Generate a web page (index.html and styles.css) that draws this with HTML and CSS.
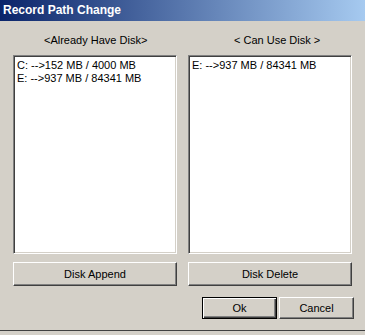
FILE: index.html
```html
<!DOCTYPE html>
<html>
<head>
<meta charset="utf-8">
<link rel="stylesheet" href="styles.css">
</head>
<body>
<div class="window">
  <div class="titlebar">Record Path Change</div>
  <div class="content">
    <div class="columns">
      <div class="column">
        <div class="label label-left">&lt;Already Have Disk&gt;</div>
        <div class="listbox">
          <div class="item">C: --&gt;152 MB / 4000 MB</div>
          <div class="item">E: --&gt;937 MB / 84341 MB</div>
        </div>
        <div class="button wide">Disk Append</div>
      </div>
      <div class="column">
        <div class="label label-right">&lt; Can Use Disk &gt;</div>
        <div class="listbox">
          <div class="item">E: --&gt;937 MB / 84341 MB</div>
        </div>
        <div class="button wide">Disk Delete</div>
      </div>
    </div>
    <div class="actions">
      <div class="button small default">Ok</div>
      <div class="button small">Cancel</div>
    </div>
  </div>
</div>
</body>
</html>
```
FILE: styles.css
```css
html, body {
  margin: 0;
  padding: 0;
  background: #d4d0c8;
}
body {
  width: 365px;
  height: 335px;
  overflow: hidden;
  font-family: "Liberation Sans", Arial, sans-serif;
  font-size: 11px;
  color: #000;
}
.window {
  height: 331px;
  box-sizing: border-box;
  border-bottom: 1px solid #404040;
  display: flex;
  flex-direction: column;
}
.titlebar {
  height: 21px;
  box-sizing: border-box;
  padding: 3px 0 0 3px;
  background: linear-gradient(to right, #0a246a 0%, #a6caf0 100%);
  color: #fff;
  font-weight: bold;
  font-size: 12px;
  line-height: 15px;
}
.content {
  padding: 0 11px 0 13px;
  display: flex;
  flex-direction: column;
}
.columns {
  display: flex;
  gap: 11px;
  margin-right: 2px;
}
.column {
  width: 164px;
  display: flex;
  flex-direction: column;
}
.label {
  margin-top: 13px;
  height: 21px;
  line-height: 13px;
}
.label-left { padding-left: 31px; }
.label-right { padding-left: 46px; }
.listbox {
  height: 199px;
  box-sizing: border-box;
  background: #fff;
  border-top: 1px solid #808080;
  border-left: 1px solid #808080;
  border-right: 1px solid #fff;
  border-bottom: 1px solid #fff;
  box-shadow: inset 1px 1px 0 #404040, inset -1px -1px 0 #d4d0c8;
  padding: 3px 0 0 3px;
}
.item {
  height: 13px;
  line-height: 13px;
  white-space: nowrap;
}
.button {
  box-sizing: border-box;
  background: #d4d0c8;
  border-top: 1px solid #fff;
  border-left: 1px solid #fff;
  border-right: 1px solid #404040;
  border-bottom: 1px solid #404040;
  box-shadow: inset -1px -1px 0 #808080;
  display: flex;
  align-items: center;
  justify-content: center;
}
.wide {
  margin-top: 8px;
  height: 24px;
}
.actions {
  display: flex;
  justify-content: flex-end;
  gap: 2px;
  margin-top: 11px;
}
.small {
  width: 75px;
  height: 22px;
}
.default {
  border: 1px solid #000;
  box-shadow: inset 1px 1px 0 #fff, inset -1px -1px 0 #404040, inset -2px -2px 0 #808080;
}
```
